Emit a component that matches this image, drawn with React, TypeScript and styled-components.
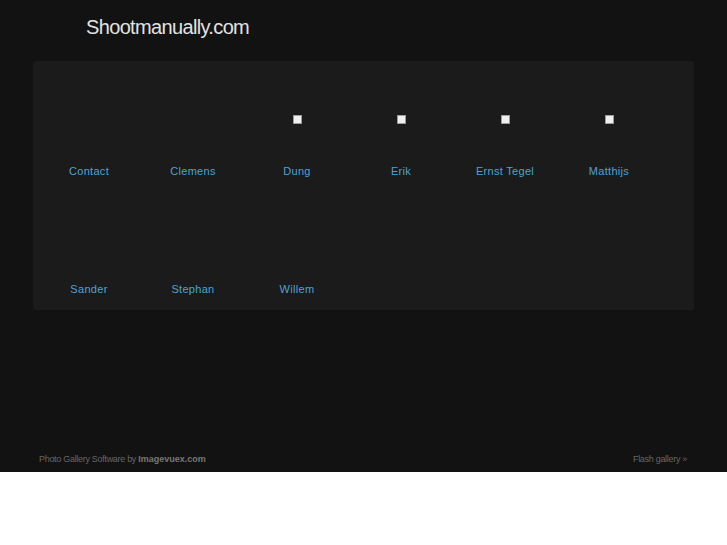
import React from "react";
import styled, { createGlobalStyle } from "styled-components";

const Global = createGlobalStyle`
  html, body { margin: 0; padding: 0; background: #ffffff; }
  body { font-family: "Liberation Sans", Arial, sans-serif; }
`;

const Page = styled.div`
  background: #121212;
  height: 472px;
  display: flex;
  flex-direction: column;
`;

const Header = styled.header`
  height: 61px;
  padding-left: 86px;
  box-sizing: border-box;
  padding-top: 15px;
`;

const Title = styled.h1`
  margin: 0;
  font-size: 20px;
  font-weight: normal;
  color: #e2e2e2;
  letter-spacing: -0.65px;
  line-height: 24px;
`;

const Panel = styled.main`
  margin-left: 33px;
  width: 661px;
  height: 249px;
  box-sizing: border-box;
  background: #1b1b1b;
  border-radius: 3px;
  padding-left: 4px;
  display: grid;
  grid-template-columns: repeat(6, 104px);
  grid-auto-rows: 118px;
  align-content: start;
`;

const Cell = styled.a`
  display: flex;
  flex-direction: column;
  align-items: center;
  text-decoration: none;
`;

const Thumb = styled.div`
  height: 102px;
  display: flex;
  justify-content: center;
  padding-top: 54px;
  box-sizing: border-box;
`;

const Square = styled.span<{ $show: boolean }>`
  width: 9px;
  height: 9px;
  box-sizing: border-box;
  background: #f0f0f0;
  border: 1px solid #9a9a9a;
  visibility: ${(p) => (p.$show ? "visible" : "hidden")};
`;

const Label = styled.span`
  height: 16px;
  line-height: 16px;
  font-size: 11px;
  letter-spacing: 0.3px;
  color: #4ca3d4;
`;

const Spacer = styled.div`
  flex: 1;
`;

const Footer = styled.footer`
  height: 18px;
  padding: 0 40px 0 39px;
  display: flex;
  justify-content: space-between;
  align-items: flex-start;
  font-size: 9px;
  color: #666666;
  letter-spacing: -0.3px;
`;

const Strong = styled.b`
  color: #777777;
  letter-spacing: 0;
`;

const items: { name: string; icon: boolean }[] = [
  { name: "Contact", icon: false },
  { name: "Clemens", icon: false },
  { name: "Dung", icon: true },
  { name: "Erik", icon: true },
  { name: "Ernst Tegel", icon: true },
  { name: "Matthijs", icon: true },
  { name: "Sander", icon: false },
  { name: "Stephan", icon: false },
  { name: "Willem", icon: false },
];

export default function App() {
  return (
    <>
      <Global />
      <Page>
        <Header>
          <Title>Shootmanually.com</Title>
        </Header>
        <Panel>
          {items.map((it) => (
            <Cell key={it.name} href="#">
              <Thumb>
                <Square $show={it.icon} />
              </Thumb>
              <Label>{it.name}</Label>
            </Cell>
          ))}
        </Panel>
        <Spacer />
        <Footer>
          <span>
            Photo Gallery Software by <Strong>Imagevuex.com</Strong>
          </span>
          <span>Flash gallery »</span>
        </Footer>
      </Page>
    </>
  );
}
